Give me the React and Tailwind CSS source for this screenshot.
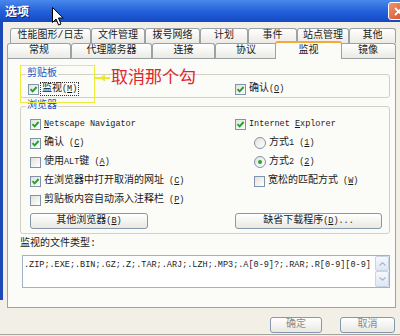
import React from 'react';

const UI = "font-['Liberation_Mono','Noto_Sans_CJK_SC',monospace]";

function Check({ on }) {
  return (
    <span className="w-[11px] h-[11px] border border-[#8193ab] bg-gradient-to-br from-[#e2e2dc] to-white flex items-center justify-center shrink-0">
      {on && (
        <svg width="9" height="9" viewBox="0 0 9 9">
          <path d="M1.5 4.2 L3.6 6.4 L7.6 2" fill="none" stroke="#22a22a" strokeWidth="1.9" />
        </svg>
      )}
    </span>
  );
}

function Radio({ on }) {
  return (
    <span className="w-[12px] h-[12px] rounded-full border border-[#8193ab] bg-gradient-to-br from-[#e2e2dc] to-white flex items-center justify-center shrink-0">
      {on && <span className="w-[4px] h-[4px] rounded-full bg-[#2aa632]" />}
    </span>
  );
}

function L({ children }) {
  return <span className="text-[8.5px]">{children}</span>;
}

function Key({ k }) {
  return (
    <L>
      {' ('}
      <span className="underline">{k}</span>
      {')'}
    </L>
  );
}

function Row({ box, indent = '', children }) {
  return (
    <div className={`flex items-center gap-[3px] h-[12px] ${indent}`}>
      {box}
      <span className="leading-[12px] whitespace-nowrap">{children}</span>
    </div>
  );
}

function Btn({ w, children, dim }) {
  return (
    <div
      className={`${w} h-[16px] border border-[#8797b0] rounded-[3px] bg-gradient-to-b from-white to-[#e9e8e1] flex items-center justify-center leading-[12px] ${
        dim ? 'text-[#8a8a8a]' : ''
      }`}
    >
      {children}
    </div>
  );
}

function Tab({ w, children }) {
  return (
    <div
      className={`${w} h-[15px] border border-b-0 border-[#9aa2a6] rounded-t-[3px] bg-gradient-to-b from-white to-[#ebeae4] flex items-center justify-center text-[10px] leading-[10px] whitespace-nowrap`}
    >
      {children}
    </div>
  );
}

export default function App() {
  return (
    <div className={`relative w-[400px] h-[336px] overflow-hidden bg-[#f1efe6] text-[10px] text-[#1a1a1a] ${UI}`}>
      {/* title bar */}
      <div className="h-[22px] bg-gradient-to-b from-[#4a88ec] via-[#2362da] to-[#1549c4] flex items-center justify-between pl-[5px]">
        <span className="text-white font-bold text-[12px] leading-[12px] font-['Noto_Sans_CJK_SC',sans-serif] [text-shadow:1px_1px_0_#0a2a80]">选项</span>
        <div className="w-[21px] h-[18px] -mr-[9px] rounded-[3px] border border-white bg-gradient-to-br from-[#f0946e] to-[#cf4a22] flex items-center justify-center">
          <svg width="9" height="9" viewBox="0 0 9 9">
            <path d="M1 1 L8 8 M8 1 L1 8" stroke="white" strokeWidth="1.8" />
          </svg>
        </div>
      </div>

      <div className="flex">
        <div className="w-[3px] h-[278px] bg-[#1c49b8] shrink-0" />
        <div className="flex-1 pl-[4px] pt-[6px]">
          {/* tab rows */}
          <div className="flex ml-[3px]">
            <Tab w="w-[81px]">性能图形/日志</Tab>
            <Tab w="w-[54px]">文件管理</Tab>
            <Tab w="w-[55px]">拨号网络</Tab>
            <Tab w="w-[48px]">计划</Tab>
            <Tab w="w-[49px]">事件</Tab>
            <Tab w="w-[52px]">站点管理</Tab>
            <Tab w="w-[47px]">其他</Tab>
          </div>
          <div className="flex items-end h-[15px]">
            <Tab w="w-[64px]">常规</Tab>
            <Tab w="w-[81px]">代理服务器</Tab>
            <Tab w="w-[63px]">连接</Tab>
            <Tab w="w-[62px]">协议</Tab>
            <div className="relative z-10 w-[67px] h-[18px] -mx-[2px] -mb-px border border-b-0 border-[#9aa2a6] border-t-[2px] border-t-[#f2a93a] rounded-t-[3px] bg-[#fbfbf8] flex items-center justify-center text-[10px] leading-[10px]">
              监视
            </div>
            <Tab w="w-[56px]">镜像</Tab>
          </div>

          {/* panel */}
          <div className="w-[389px] h-[250px] border border-[#9aa2a6] bg-[#fbfbf8] pt-[10px] pl-[12px] pr-[5px]">
            <fieldset className="border border-[#d3d1c3] rounded-[3px] pl-[7px] pt-[4px] pb-[2px]">
              <legend className="-ml-[2px] px-[1px] text-[#1f4fc0] leading-[10px]">剪贴板</legend>
              <div className="flex">
                <div className="w-[207px]">
                  <div className="flex items-center gap-[2px] h-[12px]">
                    <Check on />
                    <span className="leading-[12px] outline-1 outline-dotted outline-[#333] px-[1px]">
                      监视<L>(<span className="underline">M</span>)</L>
                    </span>
                  </div>
                </div>
                <Row box={<Check on />}>
                  确认<L>(<span className="underline">O</span>)</L>
                </Row>
              </div>
            </fieldset>

            <fieldset className="mt-[3px] border border-[#d3d1c3] rounded-[3px] pl-[9px] pt-[7px] pb-[4px]">
              <legend className="-ml-[4px] px-[1px] text-[#1f4fc0] leading-[10px]">浏览器</legend>
              <div className="grid grid-cols-[205px_1fr] gap-y-[7px]">
                <Row box={<Check on />}>
                  <L><span className="underline">N</span>etscape Navigator</L>
                </Row>
                <Row box={<Check on />}>
                  <L>Internet <span className="underline">E</span>xplorer</L>
                </Row>
                <Row box={<Check on />}>
                  确认<Key k="C" />
                </Row>
                <Row box={<Radio />} indent="pl-[19px]">
                  方式<L>1</L><Key k="1" />
                </Row>
                <Row box={<Check />}>
                  使用<L>ALT</L>键<Key k="A" />
                </Row>
                <Row box={<Radio on />} indent="pl-[19px]">
                  方式<L>2</L><Key k="2" />
                </Row>
                <Row box={<Check on />}>
                  在浏览器中打开取消的网址<Key k="C" />
                </Row>
                <Row box={<Check />} indent="pl-[19px]">
                  宽松的匹配方式<Key k="W" />
                </Row>
                <Row box={<Check />}>
                  剪贴板内容自动添入注释栏<Key k="P" />
                </Row>
                <div />
              </div>
              <div className="flex mt-[7px]">
                <div className="w-[205px]">
                  <Btn w="w-[118px]">
                    其他浏览器<Key k="B" />
                  </Btn>
                </div>
                <Btn w="w-[147px]">
                  缺省下载程序<Key k="D" /><L>...</L>
                </Btn>
              </div>
            </fieldset>

            <div className="mt-[5px] leading-[10px]">监视的文件类型:</div>
            <div className="mt-[6px] ml-[2px] w-[368px] h-[33px] border border-[#9fb3c8] bg-white flex">
              <div className="flex-1 pl-[1px] pt-[4px] text-[8.5px] leading-[10px] whitespace-nowrap overflow-hidden">
                .ZIP;.EXE;.BIN;.GZ;.Z;.TAR;.ARJ;.LZH;.MP3;.A[0-9]?;.RAR;.R[0-9][0-9]
              </div>
              <div className="w-[14px] flex flex-col bg-[#f4f6fa]">
                <div className="h-[15px] border border-[#c9d5e6] rounded-[2px] bg-gradient-to-b from-[#f6f8fc] to-[#dfe7f3] flex items-center justify-center">
                  <svg width="7" height="4" viewBox="0 0 7 4"><path d="M0.5 3.5 L3.5 0.8 L6.5 3.5" fill="none" stroke="#a8b8cc" strokeWidth="1.2" /></svg>
                </div>
                <div className="h-[16px] border border-[#c9d5e6] rounded-[2px] bg-gradient-to-b from-[#f6f8fc] to-[#dfe7f3] flex items-center justify-center">
                  <svg width="7" height="4" viewBox="0 0 7 4"><path d="M0.5 0.5 L3.5 3.2 L6.5 0.5" fill="none" stroke="#a8b8cc" strokeWidth="1.2" /></svg>
                </div>
              </div>
            </div>
          </div>

          {/* dialog buttons */}
          <div className="flex mt-[9px] pl-[263px] gap-[18px]">
            <Btn w="w-[52px]" dim>确定</Btn>
            <Btn w="w-[55px]" dim>取消</Btn>
          </div>
        </div>
      </div>
      <div className="absolute left-0 right-0 top-[334px] h-px bg-[#a6a59c]" />

      {/* annotation overlay */}
      <div className="absolute left-[20px] top-[65px] w-[75px] h-[38px] border border-[#ecec3c]" />
      <svg className="absolute left-[95px] top-[73px]" width="15" height="10" viewBox="0 0 15 10">
        <path d="M0 5 L15 5" stroke="#eaea30" strokeWidth="2" />
        <path d="M4 5 L10 1.5 L10 8.5 Z" fill="#eaea30" />
      </svg>
      <div className="absolute left-[111px] top-[66px] text-[17px] leading-[20px] text-[#e2242c] font-['Noto_Sans_CJK_SC',sans-serif]">
        取消那个勾
      </div>

      {/* mouse cursor */}
      <svg className="absolute left-[52px] top-[7px]" width="13" height="20" viewBox="0 0 13 20">
        <path d="M0.5 0.5 L0.5 15.5 L4 12 L6.6 18 L9 17 L6.5 11 L11.2 11 Z" fill="white" stroke="black" strokeWidth="1" strokeLinejoin="round" />
      </svg>
    </div>
  );
}
